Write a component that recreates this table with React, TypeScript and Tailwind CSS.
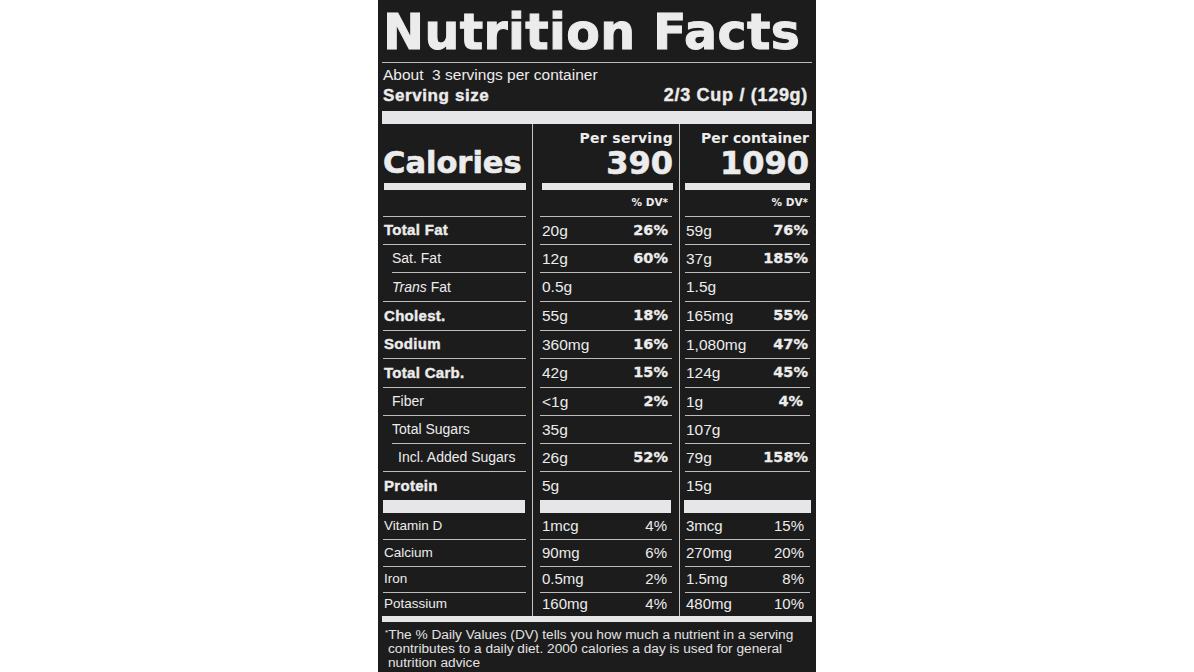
type Row = {
  label: React.ReactNode;
  bold?: boolean;
  indent?: 0 | 1 | 2;
  a: string;
  p?: string;
  b: string;
  q?: string;
  h: string;
  lineIndent?: boolean;
};

const rows: Row[] = [
  { label: 'Total Fat', bold: true, a: '20g', p: '26%', b: '59g', q: '76%', h: 'h-[27px]' },
  { label: 'Sat. Fat', indent: 1, a: '12g', p: '60%', b: '37g', q: '185%', h: 'h-[27px]', lineIndent: true },
  {
    label: (
      <>
        <span className="italic">Trans</span> Fat
      </>
    ),
    indent: 1,
    a: '0.5g',
    b: '1.5g',
    h: 'h-[28px]',
  },
  { label: 'Cholest.', bold: true, a: '55g', p: '18%', b: '165mg', q: '55%', h: 'h-[28px]' },
  { label: 'Sodium', bold: true, a: '360mg', p: '16%', b: '1,080mg', q: '47%', h: 'h-[27px]' },
  { label: 'Total Carb.', bold: true, a: '42g', p: '15%', b: '124g', q: '45%', h: 'h-[28px]' },
  { label: 'Fiber', indent: 1, a: '<1g', p: '2%', b: '1g', q: '4%', h: 'h-[27px]' },
  { label: 'Total Sugars', indent: 1, a: '35g', b: '107g', h: 'h-[27px]', lineIndent: true },
  { label: 'Incl. Added Sugars', indent: 2, a: '26g', p: '52%', b: '79g', q: '158%', h: 'h-[27px]' },
];

const minerals = [
  { label: 'Vitamin D', a: '1mcg', p: '4%', b: '3mcg', q: '15%', h: 'h-[26px]', line: true },
  { label: 'Calcium', a: '90mg', p: '6%', b: '270mg', q: '20%', h: 'h-[26px]', line: true },
  { label: 'Iron', a: '0.5mg', p: '2%', b: '1.5mg', q: '8%', h: 'h-[25px]', line: true },
  { label: 'Potassium', a: '160mg', p: '4%', b: '480mg', q: '10%', h: 'h-[23px]', line: false },
];

const heavy = "font-['DejaVu_Sans',sans-serif] font-bold";
const sans = "font-['Liberation_Sans',Arial,sans-serif]";
const line = 'h-px bg-[#bcbcbc]';
const bar = 'bg-[#e6e6e8]';

export default function App() {
  const indentCls = ['pl-[2px]', 'pl-[10px]', 'pl-[16px]'];

  return (
    <div className="w-full h-[672px] bg-white flex justify-center">
      <div className={`w-[438px] h-[672px] bg-[#1d1c1d] text-[#ececec] px-[4px] ${sans}`}>
        {/* title */}
        <div className="h-[62px] pt-[8px]">
          <div className={`${heavy} text-[49px] leading-[49px] pl-[1px] whitespace-nowrap tracking-[0.4px] [-webkit-text-stroke:1px_#ececec]`}>
            Nutrition Facts
          </div>
        </div>
        <div className={line} />
        <div className="mt-[3px] pl-[1px] text-[15.5px] leading-[18px] whitespace-pre">About  3 servings per container</div>
        <div className="mt-[1px] h-[20px] flex justify-between items-baseline pl-[1px] pr-[4px] font-bold leading-[20px] [-webkit-text-stroke:0.4px_#ececec]">
          <span className="text-[17px] tracking-[0.6px]">Serving size</span>
          <span className="text-[18px] tracking-[0.7px]">2/3 Cup / (129g)</span>
        </div>
        <div className={`mt-[6px] h-[13px] ${bar}`} />

        {/* columns */}
        <div className="flex">
          {/* labels */}
          <div className="w-[150px]">
            <div className="h-[92px] pt-[23px]">
              <div className={`${heavy} text-[30.5px] leading-[32px] pl-[1px] [-webkit-text-stroke:0.6px_#ececec]`}>Calories</div>
              <div className={`mt-[4px] h-[7px] ml-[2px] mr-[6px] ${bar}`} />
            </div>
            <div className={`${line} ml-[1px] mr-[6px]`} />
            {rows.map((r, i) => (
              <div key={i}>
                <div
                  className={`${r.h} flex items-center ${indentCls[r.indent ?? 0]} ${
                    r.bold ? 'text-[15px] font-bold tracking-[0.3px] [-webkit-text-stroke:0.4px_#ececec]' : 'text-[14px]'
                  }`}
                >
                  <span>{r.label}</span>
                </div>
                <div className={`${line} ${r.lineIndent ? 'ml-[10px]' : 'ml-[1px]'} mr-[6px]`} />
              </div>
            ))}
            <div className="h-[28px] flex items-center pl-[2px] text-[15px] font-bold tracking-[0.3px] [-webkit-text-stroke:0.4px_#ececec]">
              Protein
            </div>
            <div className="h-[13px] flex items-center">
              <div className={`h-[13px] w-full ml-[1px] mr-[7px] ${bar}`} />
            </div>
            {minerals.map((m, i) => (
              <div key={i}>
                <div className={`${m.h} flex items-center pl-[2px] text-[13.5px]`}>{m.label}</div>
                {m.line && <div className={`${line} ml-[1px] mr-[6px]`} />}
              </div>
            ))}
          </div>

          {/* per serving */}
          <div className="w-[147px] border-l border-[#c4c4c4]">
            <div className="h-[92px] pt-[6px] text-right pr-[6px]">
              <div className={`${heavy} text-[14px] leading-[17px] tracking-[0.3px]`}>Per serving</div>
              <div className={`${heavy} text-[32px] leading-[32px] [-webkit-text-stroke:0.6px_#ececec]`}>390</div>
              <div className={`mt-[4px] h-[7px] ml-[9px] ${bar}`} />
              <div className={`${heavy} mt-[6px] pr-[5px] text-[10.5px] leading-[12px]`}>% DV*</div>
            </div>
            <div className={`${line} ml-[7px] mr-[7px]`} />
            {rows.map((r, i) => (
              <div key={i}>
                <div className={`${r.h} flex items-center justify-between pl-[9px] pr-[11px]`}>
                  <span className="text-[15.5px]">{r.a}</span>
                  <span className={`${heavy} text-[14.5px] [-webkit-text-stroke:0.3px_#ececec]`}>{r.p}</span>
                </div>
                <div className={`${line} ml-[7px] mr-[7px]`} />
              </div>
            ))}
            <div className="h-[28px] flex items-center pl-[9px] text-[15.5px]">5g</div>
            <div className={`h-[13px] ml-[7px] mr-[8px] ${bar}`} />
            {minerals.map((m, i) => (
              <div key={i}>
                <div className={`${m.h} flex items-center justify-between pl-[9px] pr-[12px] text-[15px]`}>
                  <span>{m.a}</span>
                  <span>{m.p}</span>
                </div>
                {m.line && <div className={`${line} ml-[7px] mr-[7px]`} />}
              </div>
            ))}
          </div>

          {/* per container */}
          <div className="flex-1 border-l border-[#c4c4c4]">
            <div className="h-[92px] pt-[6px] text-right pr-[3px]">
              <div className={`${heavy} text-[14px] leading-[17px] tracking-[0.1px]`}>Per container</div>
              <div className={`${heavy} text-[32px] leading-[32px] [-webkit-text-stroke:0.6px_#ececec]`}>1090</div>
              <div className={`mt-[4px] h-[7px] ml-[5px] mr-[-1px] ${bar}`} />
              <div className={`${heavy} mt-[6px] pr-[1px] text-[10.5px] leading-[12px]`}>% DV*</div>
            </div>
            <div className={`${line} ml-[5px] mr-[2px]`} />
            {rows.map((r, i) => (
              <div key={i}>
                <div className={`${r.h} flex items-center justify-between pl-[6px] ${r.q && r.q.length === 2 ? 'pr-[9px]' : 'pr-[4px]'}`}>
                  <span className="text-[15.5px]">{r.b}</span>
                  <span className={`${heavy} text-[14.5px] [-webkit-text-stroke:0.3px_#ececec]`}>{r.q}</span>
                </div>
                <div className={`${line} ml-[5px] mr-[2px]`} />
              </div>
            ))}
            <div className="h-[28px] flex items-center pl-[6px] text-[15.5px]">15g</div>
            <div className={`h-[13px] ml-[4px] mr-[1px] ${bar}`} />
            {minerals.map((m, i) => (
              <div key={i}>
                <div className={`${m.h} flex items-center justify-between pl-[6px] pr-[8px] text-[15px]`}>
                  <span>{m.b}</span>
                  <span>{m.q}</span>
                </div>
                {m.line && <div className={`${line} ml-[5px] mr-[2px]`} />}
              </div>
            ))}
          </div>
        </div>

        <div className={`h-[6px] ${bar}`} />
        <div className="mt-[6px] pl-[6px] text-[13.7px] leading-[14px] text-[#e2e2e2] whitespace-nowrap">
          <div className="-indent-[3px]">
            <sup className="text-[8px]">*</sup>The % Daily Values (DV) tells you how much a nutrient in a serving
          </div>
          <div>contributes to a daily diet. 2000 calories a day is used for general</div>
          <div>nutrition advice</div>
        </div>
      </div>
    </div>
  );
}
